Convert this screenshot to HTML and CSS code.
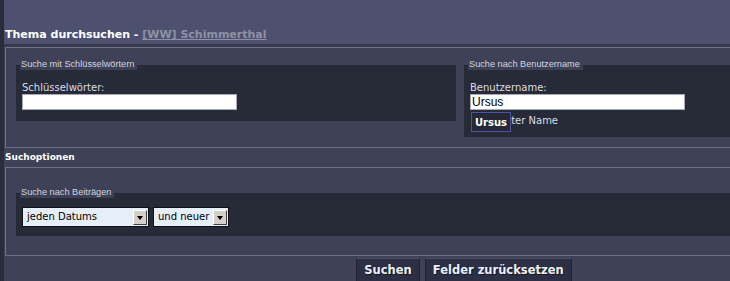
FILE: index.html
```html
<!DOCTYPE html>
<html>
<head>
<meta charset="utf-8">
	<title>Thema durchsuchen</title>
	<link rel="stylesheet" href="styles.css">
</head>
<body>
	<div class="page">
		<div class="title-bar">
			<h1>Thema durchsuchen - <a href="#">[WW] Schimmerthal</a></h1>
		</div>

		<div class="group group-top">
			<fieldset class="box">
				<legend>Suche mit Schlüsselwörtern</legend>
				<label class="lbl" for="keywords">Schlüsselwörter:</label>
				<input class="txt" type="text" id="keywords">
			</fieldset>
			<fieldset class="box box-user">
				<legend>Suche nach Benutzername</legend>
				<label class="lbl" for="author">Benutzername:</label>
				<div class="ac">
					<input class="txt" type="text" id="author" value="Ursus">
					<div class="ac-list">Ursus</div>
				</div>
				<div class="check-row">
					<input type="checkbox" id="exact">
					<label for="exact">Exakter Name</label>
				</div>
			</fieldset>
		</div>

		<h2 class="caption">Suchoptionen</h2>

		<div class="group group-opts">
			<fieldset class="box">
				<legend>Suche nach Beiträgen</legend>
				<div class="selects">
					<div class="select sel-date">
						<span class="sel-text">jeden Datums</span>
						<span class="sel-btn"><i></i></span>
					</div>
					<div class="select sel-dir">
						<span class="sel-text">und neuer</span>
						<span class="sel-btn"><i></i></span>
					</div>
				</div>
			</fieldset>
		</div>

		<div class="buttons">
			<button class="btn" type="submit">Suchen</button>
			<button class="btn" type="reset">Felder zurücksetzen</button>
		</div>
	</div>
</body>
</html>
```

FILE: styles.css
```css
*{
	margin: 0;
	padding: 0;
	box-sizing: border-box;
}
html,body{
	background: #3e4157;
	overflow: hidden;
}
body{
	font-family: "DejaVu Sans", Verdana, sans-serif;
	font-size: 10px;
	color: #dcdde6;
}
.page{
	width: 928px;
	min-height: 281px;
	border-left: 4px solid #2a2c3b;
	border-right: 4px solid #2a2c3b;
}
.title-bar{
	height: 47px;
	padding: 28px 0 0 1px;
	background: #4d516f;
	border-bottom: 3px solid #383b4f;
}
.title-bar h1{
	font-size: 11px;
	line-height: 14px;
	font-weight: bold;
	color: #fff;
}
.title-bar a{
	color: #8e91a6;
}
.group{
	margin: 0 1px;
	border: 1px solid #6f7287;
}
.group-top{
	display: grid;
	grid-template-columns: 440px 1fr;
	column-gap: 8px;
	align-items: start;
	padding: 11px 10px 10px;
}
.group-opts{
	padding: 19px 10px;
}
.caption{
	padding-left: 1px;
	font-size: 9px;
	line-height: 19px;
	font-weight: bold;
	color: #fff;
}
.box{
	border: 0;
	min-width: 0;
	background: #272a37;
	padding: 11px 6px 11px;
}
.box legend{
	margin-left: -2px;
	padding: 0 3px 0 1px;
	background: #3d4056;
	font-family: "Liberation Sans", Arial, sans-serif;
	font-size: 9.2px;
	line-height: 11px;
	color: #d4d5de;
}
.box-user{
	padding-bottom: 9px;
}
.group-opts .box{
	padding: 9px 6px 9px;
}
.lbl{
	display: block;
	line-height: 13px;
}
.txt{
	display: block;
	width: 215px;
	height: 16px;
	border: 1px solid #a7a9b8;
	padding: 0 1px;
	background: #fff;
	font-family: "Liberation Sans", Arial, sans-serif;
	font-size: 12px;
	line-height: 14px;
	color: #000;
	outline: none;
}
.ac{
	position: relative;
}
.ac-list{
	position: absolute;
	top: 18px;
	left: 1px;
	width: 40px;
	height: 20px;
	padding-left: 3px;
	border: 1px solid #4d53a3;
	background: #262836;
	font-weight: bold;
	line-height: 19px;
	color: #fff;
}
.check-row{
	display: flex;
	align-items: center;
	margin-top: 3px;
	line-height: 15px;
}
.check-row input{
	width: 13px;
	height: 13px;
	margin: 0 3px 0 1px;
}
.selects{
	display: flex;
	gap: 4px;
}
.select{
	display: flex;
	align-items: center;
	height: 20px;
	padding: 0 1px 0 4px;
	border: 1px solid #101117;
	background: #e6eef8;
	color: #000;
	line-height: 18px;
}
.sel-date{
	width: 127px;
}
.sel-dir{
	width: 76px;
}
.sel-text{
	flex: 1;
}
.sel-btn{
	display: flex;
	align-items: center;
	justify-content: center;
	width: 14px;
	height: 15px;
	margin-top: 1px;
	background: #d4d0c8;
	border-top: 1px solid #fff;
	border-left: 1px solid #fff;
	border-right: 1px solid #404040;
	border-bottom: 1px solid #404040;
}
.sel-btn i{
	width: 0;
	height: 0;
	border-left: 3px solid transparent;
	border-right: 3px solid transparent;
	border-top: 4px solid #000;
}
.buttons{
	display: flex;
	justify-content: center;
	gap: 5px;
	margin-top: 2px;
}
.btn{
	height: 24px;
	padding: 0 7px;
	border: 1px solid #222433;
	border-top-color: #4a4d64;
	background: #2d3044;
	font-family: "DejaVu Sans", Verdana, sans-serif;
	font-size: 11.5px;
	line-height: 22px;
	font-weight: bold;
	color: #eef0f8;
	text-shadow: 1px 1px 0 #15161f;
}
```
